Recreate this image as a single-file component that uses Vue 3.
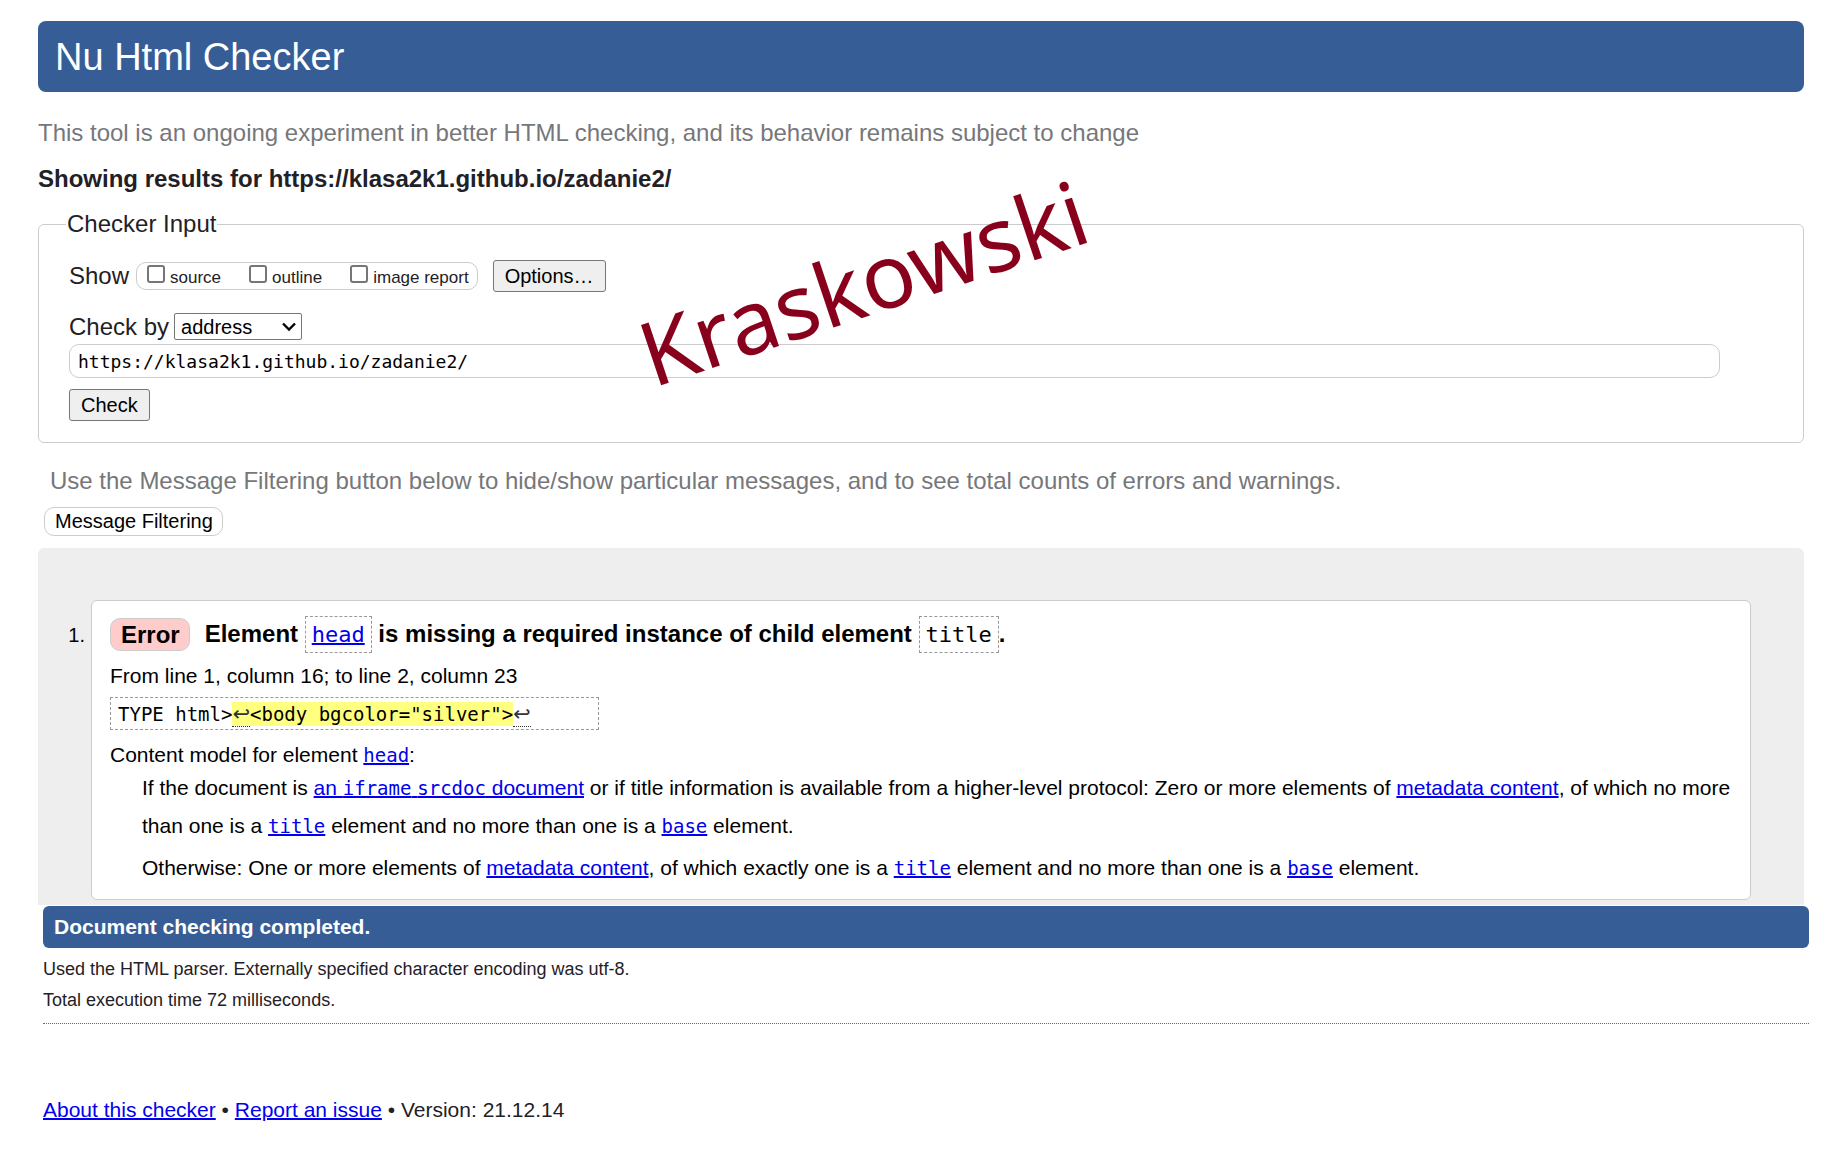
<script setup>
import { ref } from 'vue'

const shows = ref([
  { id: 'source', label: 'source', on: false },
  { id: 'outline', label: 'outline', on: false },
  { id: 'image-report', label: 'image report', on: false },
])
const method = ref('address')
const address = ref('https://klasa2k1.github.io/zadanie2/')
</script>

<template>
  <div class="page">
    <h1 class="banner">Nu Html Checker</h1>
    <p class="intro">This tool is an ongoing experiment in better HTML checking, and its behavior remains subject to change</p>
    <h2 class="subject">Showing results for https://klasa2k1.github.io/zadanie2/</h2>

    <form @submit.prevent>
      <fieldset class="inputs">
        <legend>Checker Input</legend>
        <div class="show-row">
          <span class="row-label">Show</span>
          <div class="checks">
            <label v-for="s in shows" :key="s.id" class="check" :for="s.id">
              <input :id="s.id" v-model="s.on" type="checkbox">
              <span>{{ s.label }}</span>
            </label>
          </div>
          <button type="button" class="btn options">Options…</button>
        </div>
        <div class="by-row">
          <label class="row-label" for="method">Check by</label>
          <div class="select-wrap">
            <select id="method" v-model="method">
              <option value="address">address</option>
              <option value="upload">file upload</option>
              <option value="text">text input</option>
            </select>
            <svg class="chevron" viewBox="0 0 14 10" aria-hidden="true"><path d="M1 1.5 7 7.5 13 1.5" fill="none" stroke="#000" stroke-width="2.4" /></svg>
          </div>
        </div>
        <input v-model="address" class="address" type="text" aria-label="Address">
        <button type="submit" class="btn submit">Check</button>
      </fieldset>
    </form>

    <p class="filter-hint">Use the Message Filtering button below to hide/show particular messages, and to see total counts of errors and warnings.</p>
    <button type="button" class="filter">Message Filtering</button>

    <ol class="results">
      <li>
        <div class="message">
          <p class="headline">
            <strong class="badge">Error</strong>
            <span>Element <code class="tag"><a href="#head">head</a></code> is missing a required instance of child element <code class="tag">title</code>.</span>
          </p>
          <p class="location">From line 1, column 16; to line 2, column 23</p>
          <p class="extract"><code>TYPE html&gt;<b><span class="lf">↩</span>&lt;body bgcolor="silver"&gt;</b><span class="lf">↩</span></code></p>
          <dl class="model">
            <dt>Content model for element <a href="#head"><code>head</code></a>:</dt>
            <dd>If the document is <a href="#srcdoc">an <code>iframe</code> <code>srcdoc</code> document</a> or if title information is available from a higher-level protocol: Zero or more elements of <a href="#metadata">metadata content</a>, of which no more than one is a <a href="#title"><code>title</code></a> element and no more than one is a <a href="#base"><code>base</code></a> element.</dd>
            <dd>Otherwise: One or more elements of <a href="#metadata">metadata content</a>, of which exactly one is a <a href="#title"><code>title</code></a> element and no more than one is a <a href="#base"><code>base</code></a> element.</dd>
          </dl>
        </div>
      </li>
    </ol>

    <div class="closing">
      <p class="done">Document checking completed.</p>
      <div class="stats">
        <p>Used the HTML parser. Externally specified character encoding was utf-8.</p>
        <p>Total execution time 72 milliseconds.</p>
      </div>
      <footer><a href="#about">About this checker</a> • <a href="#issue">Report an issue</a> • Version: 21.12.14</footer>
    </div>

    <div class="signature">Kraskowski</div>
  </div>
</template>

<style>
body { background: #fff; }
</style>

<style scoped>
.page {
  position: relative;
  padding: 21px 27px 38px 38px;
  font-family: "Liberation Sans", Arial, sans-serif;
  font-size: 21px;
  line-height: 28px;
  color: #1f2126;
}
p, h1, h2, dl, dd, ol { margin: 0; padding: 0; }
button, input, select { box-sizing: border-box; margin: 0; font-family: inherit; color: #000; }
code { font-family: "DejaVu Sans Mono", monospace; font-size: 19px; line-height: 1; }
a { color: #00e; text-decoration-thickness: 2px; }

.banner {
  padding: 2px 17px 0;
  border-radius: 8px;
  background: #365d95;
  color: #fff;
  font-size: 38px;
  font-weight: 400;
  line-height: 69px;
}
.intro { margin-top: 27px; font-size: 24px; color: #76777a; }
.subject { margin-top: 18px; font-size: 24px; }

.inputs {
  min-width: 0;
  margin: 17px 0 0;
  padding: 22px 83px 21px 30px;
  border: 1px solid #ccc;
  border-radius: 6px;
}
legend { margin-left: -3px; padding: 0 1px; font-size: 24px; }
.show-row, .by-row { display: flex; align-items: center; }
.row-label { font-size: 24px; }
.checks {
  display: flex;
  align-items: center;
  gap: 28px;
  height: 26px;
  margin-left: 7px;
  padding: 0 8px 0 10px;
  border: 1px solid #ccc;
  border-radius: 10px;
}
.check { display: flex; align-items: center; gap: 5px; font-size: 17px; line-height: 26px; }
.check span { padding-top: 3px; line-height: 22px; }
.check input {
  appearance: none;
  width: 18px;
  height: 18px;
  margin-bottom: 4px;
  border: 2px solid #767676;
  border-radius: 3px;
  background: #fff;
}
.check input:checked { background: #0075ff; }
.btn {
  height: 32px;
  border: 1px solid #767676;
  border-radius: 3px;
  background: #efefef;
  font-size: 20px;
}
.options { margin-left: 15px; padding: 0 11px; }
.by-row { height: 27px; margin-top: 21px; gap: 5px; }
.select-wrap { position: relative; }
select {
  display: block;
  appearance: none;
  width: 128px;
  height: 27px;
  padding: 0 6px;
  border: 1px solid #767676;
  border-radius: 2px;
  background: #fff;
  font-size: 20px;
}
.chevron { position: absolute; top: 9px; right: 6px; width: 14px; height: 10px; pointer-events: none; }
.address {
  display: block;
  width: 100%;
  height: 34px;
  margin-top: 4px;
  padding: 0 8px;
  border: 1px solid #ccc;
  border-radius: 10px;
  background: #fff;
  font-family: "DejaVu Sans Mono", monospace;
  font-size: 18px;
}
.submit { display: block; margin-top: 11px; padding: 0 11px; }

.filter-hint { margin: 24px 0 0 12px; font-size: 24px; color: #76777a; }
.filter {
  display: block;
  height: 29px;
  margin: 12px 0 12px 6px;
  padding: 0 9px 0 10px;
  border: 1px solid #ccc;
  border-radius: 10px;
  background: #fff;
  font-size: 20px;
}

.results {
  padding: 52px 53px 5px;
  border-radius: 6px 6px 0 0;
  background: #eee;
  color: #000;
  list-style: none;
  counter-reset: item;
}
.results li { position: relative; counter-increment: item; }
.results li::before {
  content: counter(item) ".";
  position: absolute;
  top: 21px;
  right: 100%;
  margin-right: 6px;
  font-size: 20px;
}
.message { padding: 15px 18px 12px; border: 1px solid #ccc; border-radius: 6px; background: #fff; }
.headline { display: flex; align-items: center; gap: 15px; font-size: 24px; font-weight: 700; line-height: 36px; }
.badge { padding: 0 9px 0 10px; border: 1px solid #ccc; border-radius: 10px; background: #fcc; line-height: 31px; }
.tag { padding: 5px 6px; border: 1px dashed #999; font-size: 22px; font-weight: 400; }
.location { margin-top: 10px; }
.extract {
  box-sizing: border-box;
  width: 489px;
  height: 33px;
  margin-top: 7px;
  padding: 0 7px;
  border: 1px dashed #999;
  line-height: 31px;
}
.extract b { padding: 1px 0; background: #ffff80; font-weight: 400; }
.lf { border-bottom: 1px dotted #333; color: #333; font-family: "DejaVu Sans", sans-serif; font-size: 21px; }
.model { margin-top: 11px; }
.model dd { margin-left: 32px; line-height: 38px; }
.model dd + dd { margin-top: 4px; }

.closing { margin: 1px -5px 0 5px; }
.done { padding: 0 11px; border-radius: 6px; background: #365d95; color: #fff; font-weight: 700; line-height: 42px; }
.stats { margin-top: 6px; padding-bottom: 7px; border-bottom: 1px dotted #666; font-size: 18px; line-height: 31px; }
footer { margin-top: 72px; }

/* rotated name stamped over the form */
.signature {
  position: absolute;
  top: 310px;
  left: 653px;
  font-family: "Noto Sans", sans-serif;
  font-size: 89px;
  line-height: 88px;
  color: #88001b;
  white-space: nowrap;
  pointer-events: none;
  transform: rotate(-18.5deg);
  transform-origin: 0 78px;
}
</style>
